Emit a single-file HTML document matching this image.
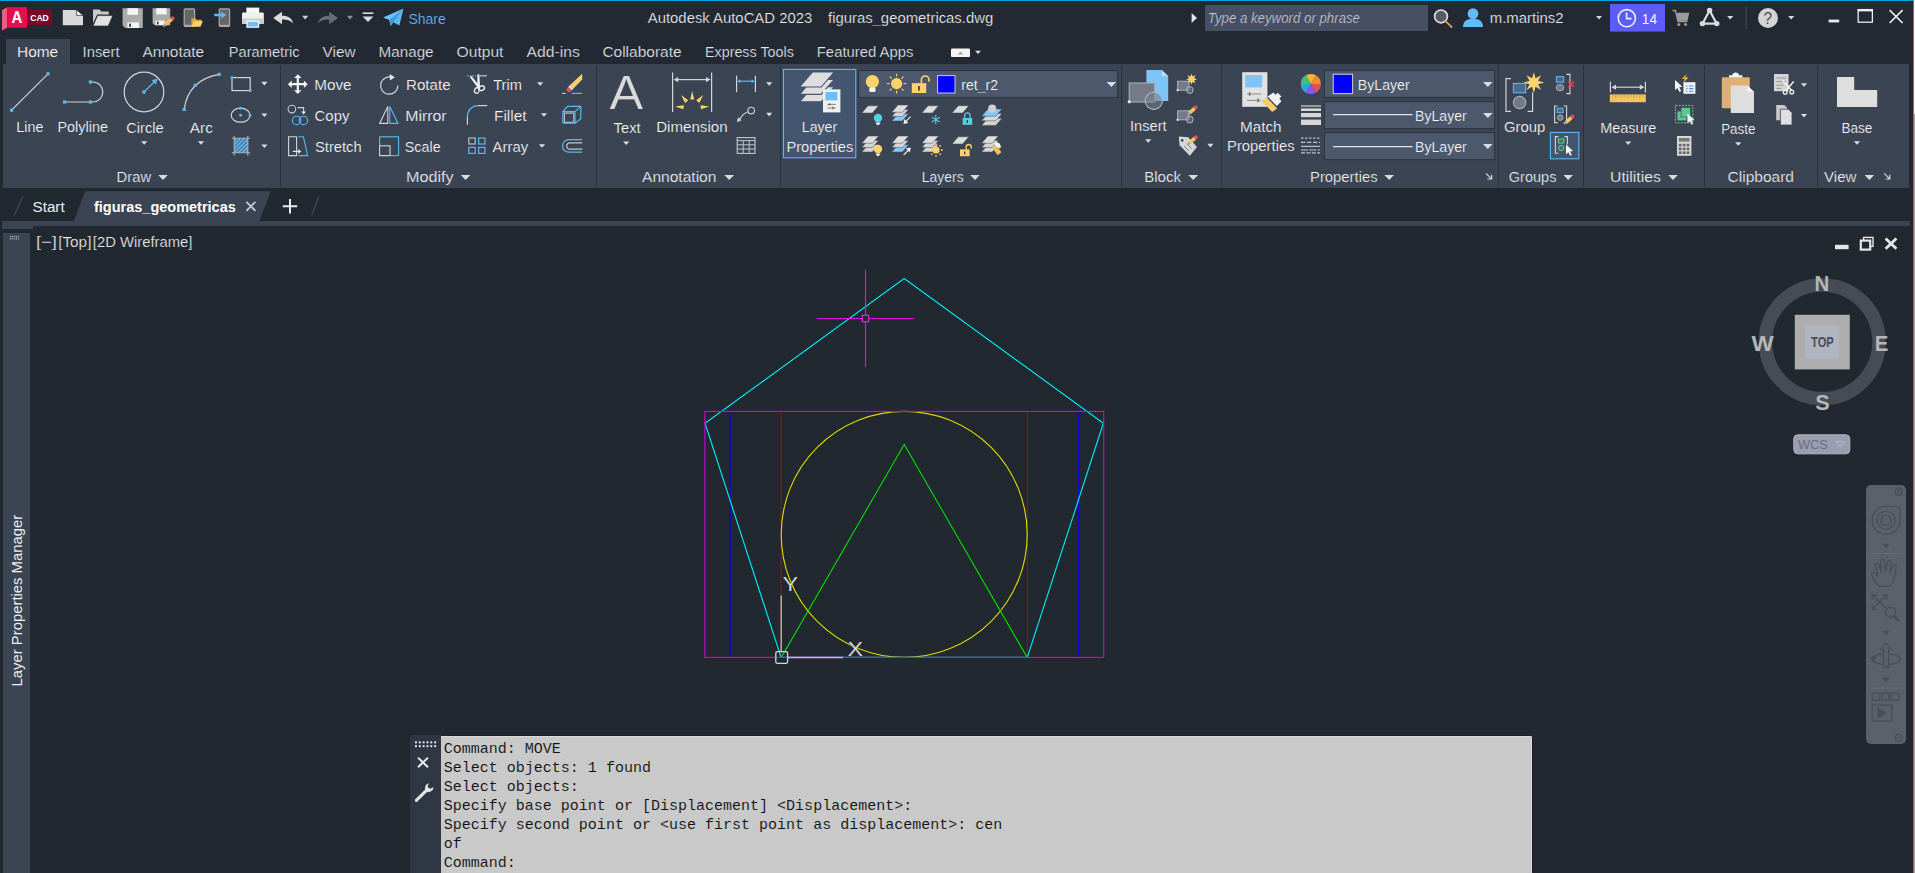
<!DOCTYPE html>
<html lang="en"><head><meta charset="utf-8"><title>Autodesk AutoCAD 2023 - figuras_geometricas.dwg</title>
<style>
html,body{margin:0;padding:0;background:#222933;overflow:hidden}
body{width:1915px;height:873px;position:relative;font-family:"Liberation Sans",sans-serif}
#app{position:absolute;left:0;top:0;width:1915px;height:873px;background:#212830;overflow:hidden}
#titlebg{left:0;top:0;width:1915px;height:64px;background:#222933}
#app div{position:absolute}
#topline{left:0;top:0;width:1915px;height:1px;background:#04a0e8}
#topline2{left:0;top:1px;width:1913px;height:1px;background:#24232a}
#edged{left:1912px;top:1px;width:1px;height:872px;background:#24232a}
#tabhome{left:6px;top:39px;width:64px;height:26px;background:#3b4453}
#ribbon{left:3px;top:64px;width:1906px;height:124px;background:#3b4453}
#docband{left:2px;top:221px;width:1908px;height:5px;background:#3b4453}
#docband2{left:2px;top:221px;width:31px;height:8px;background:#3b4453}
#palette{left:3px;top:233px;width:27px;height:640px;background:#3b4453}
#cmdgrip{left:410px;top:735px;width:31px;height:138px;background:#2f3644;border-top-left-radius:3px}
#cmdtext{left:441px;top:736px;width:1091px;height:137px;background:#c9c9c9;border-top:1px solid #dadada;border-right:1px solid #dadada;box-sizing:border-box;border-top-right-radius:1.5px;box-shadow:1px -1px 0 #1a212b}
#navbar{left:1866px;top:485px;width:40px;height:259px;background:#5b616b;border-radius:5px;box-shadow:none}
#edgeblue{left:1913px;top:0;width:1px;height:873px;background:#04a0e8}
#edgew{left:1914px;top:0;width:1px;height:114px;background:#f4f2ee}
#edgeg{left:1914px;top:114px;width:1px;height:759px;background:#a89e9e}
svg{position:absolute;left:0;top:0}
text{font-family:"Liberation Sans",sans-serif;white-space:pre}
.mono text{font-family:"Liberation Mono",monospace}
</style></head><body>
<div id="app">
<div id="titlebg"></div><div id="topline"></div><div id="topline2"></div>
<div id="tabhome"></div><div id="ribbon"></div>
<div id="docband"></div><div id="docband2"></div><div id="palette"></div>
<div id="cmdgrip"></div><div id="cmdtext"></div><div id="navbar"></div>
<div id="edged"></div><div id="edgeblue"></div><div id="edgew"></div><div id="edgeg"></div>
<svg width="1915" height="873" viewBox="0 0 1915 873">
<g id="titlebar">
<path d="M2 10.3L7.2 7.2V27.6L2 30.4z" fill="#ee5a86" />
<rect x="7.20" y="7.10" width="19.80" height="20.60" fill="#e50e4e" />
<rect x="27.00" y="10.00" width="25.00" height="15.00" fill="#7a0828" />
<text x="11.60" y="23.00" font-size="16.5" fill="#fff" textLength="10.80" lengthAdjust="spacingAndGlyphs" font-weight="bold" >A</text>
<text x="30.20" y="21.00" font-size="8.6" fill="#fff" textLength="18.60" lengthAdjust="spacingAndGlyphs" font-weight="bold" >CAD</text>
<path d="M62.8 10h13.8l6.4 5.4V25.2H62.8z" fill="#d9d9d9" />
<path d="M76.6 10l6.4 5.4h-6.4z" fill="#fafafa" stroke="#212830" stroke-width="0.7" />
<path d="M93 9.4h6.4l1.8 2.2h7.6v3H97.2l-4.2 8.6z" fill="#c9c9c9" />
<path d="M97.6 15.6h15.2l-4.6 10.4H93z" fill="#e2e2e2" stroke="#212830" stroke-width="0.6" />
<path d="M122.6 8.2h20.2v19.8h-17.6l-2.6-2.4z" fill="#ababab" />
<rect x="127.40" y="8.20" width="10.60" height="6.60" fill="#f4f4f4" />
<rect x="127.40" y="22.40" width="11.60" height="5.60" fill="#f4f4f4" />
<rect x="129.20" y="23.60" width="1.70" height="3.40" fill="#333" />
<path d="M152.6 8.2h17.6v17h-15.4l-2.2-2z" fill="#ababab" />
<rect x="156.20" y="8.20" width="10.40" height="6.20" fill="#f4f4f4" />
<rect x="155.60" y="20.60" width="9.00" height="4.60" fill="#f4f4f4" />
<rect x="157.00" y="21.60" width="1.60" height="2.80" fill="#333" />
<path d="M163.2 26.8l0.9-3.6 6.8-5.6 2.4 2.6-6.8 5.6z" fill="#eec15c" />
<path d="M170.2 18l1.5-1.2a1.6 1.6 0 0 1 2.3 0.3l0.3 0.5a1.5 1.5 0 0 1-0.3 2l-1.4 1.1z" fill="#e8505a" />
<path d="M163.2 26.8l0.9-3.6 2.2 2.4z" fill="#9a9a9a" />
<rect x="183.60" y="8.20" width="11.60" height="18.80" fill="#a8a8a8" rx="1.5"/>
<rect x="184.80" y="9.60" width="9.20" height="15.20" fill="#666" />
<path d="M191.4 18.6h4.2l1 1.2h5v2h-7.4l-2.8 4.8z" fill="#e0ac3a" />
<path d="M194 21.2h8.8l-2.4 5.6h-9z" fill="#ffd36b" />
<rect x="218.60" y="8.20" width="11.60" height="18.80" fill="#a8a8a8" rx="1.5"/>
<rect x="219.80" y="9.60" width="9.20" height="15.20" fill="#666" />
<path d="M214.2 13.8h7.2v-2.4l5 3.6-5 3.6v-2.4h-7.2z" fill="#5ab5f2" />
<rect x="246.40" y="7.60" width="12.80" height="6.00" fill="#f6f6f6" />
<path d="M243 12.6h19.6a1.2 1.2 0 0 1 1.2 1.2v10H242v-10a1.2 1.2 0 0 1 1-1.2z" fill="#f0f0f0" />
<rect x="242.00" y="18.40" width="21.80" height="5.40" fill="#cfcfcf" />
<rect x="246.40" y="20.60" width="12.80" height="7.20" fill="#fbfbfb" />
<rect x="247.60" y="21.80" width="10.40" height="4.80" fill="#74bdf4" />
<path d="M273.2 18l8.800-6.200v4c6 0 10.600 2.600 11 8-2.400-3.400-5.800-4.200-11-4.200v4.600z" fill="#dcdcdc" />
<path d="M302.10 15.80h6.2l-3.10 3.6z" fill="#cfcfcf" />
<path d="M338 18l-8.800-6.200v4c-6 0-10.600 2.600-11 8 2.400-3.400 5.800-4.200 11-4.200v4.600z" fill="#666c78" />
<path d="M346.90 15.80h6.2l-3.10 3.6z" fill="#8c919b" />
<rect x="362.60" y="12.40" width="10.80" height="1.60" fill="#dcdcdc" />
<path d="M362.6 16.4h10.8l-5.4 5.6z" fill="#dcdcdc" />
<path d="M383.4 17.6l20-8.8-4 16.8-6.2-3.4-2.6 3.8-1.4-6.2z" fill="#5cb8f0" />
<path d="M389.2 19.8l13-10-8.8 12.4-2.8 3.8z" fill="#3d9ede" />
<path d="M403.4 8.8l-14.2 11-5.8-2.2z" fill="#6cc2f6" />
<text x="408.40" y="24.00" font-size="15.4" fill="#69bdf5" textLength="37.40" lengthAdjust="spacingAndGlyphs" stroke="#212830" stroke-width="0.22" >Share</text>
<text x="647.80" y="23.20" font-size="15.2" fill="#f0f0f0" textLength="164.40" lengthAdjust="spacingAndGlyphs" stroke="#212830" stroke-width="0.22" >Autodesk AutoCAD 2023</text>
<text x="828.00" y="23.20" font-size="15.2" fill="#f0f0f0" textLength="165.20" lengthAdjust="spacingAndGlyphs" stroke="#212830" stroke-width="0.22" >figuras_geometricas.dwg</text>
<path d="M1191.6 13l5.4 5-5.4 5z" fill="#e6e6e6" />
<rect x="1205.00" y="5.00" width="223.00" height="26.00" fill="#464f63" />
<text x="1207.80" y="23.00" font-size="14.6" fill="#c4c8d0" textLength="152.20" lengthAdjust="spacingAndGlyphs" font-style="italic" stroke="#464f63" stroke-width="0.22" >Type a keyword or phrase</text>
<circle cx="1441.00" cy="16.40" r="6.40" fill="#555c68" stroke="#dedede" stroke-width="1.7" />
<line x1="1445.80" y1="21.40" x2="1451.60" y2="27.00" stroke="#d9a05a" stroke-width="1.8" stroke-linecap="round"/>
<circle cx="1473.00" cy="13.60" r="5.40" fill="#62bbf4" />
<path d="M1463 27c0-6 4-8.2 10-8.2s10 2.2 10 8.2z" fill="#62bbf4" />
<text x="1489.80" y="23.20" font-size="15.2" fill="#f0f0f0" textLength="73.80" lengthAdjust="spacingAndGlyphs" stroke="#212830" stroke-width="0.22" >m.martins2</text>
<path d="M1595.90 16.00h6.2l-3.10 3.6z" fill="#d6d6d6" />
<rect x="1610.00" y="4.00" width="55.00" height="27.60" fill="#5c5cf6" />
<circle cx="1626.80" cy="18.20" r="8.60" fill="none" stroke="#ececff" stroke-width="1.6" />
<path d="M1626.6 12.6v6h5" fill="none" stroke="#ececff" stroke-width="1.6" />
<text x="1641.80" y="24.00" font-size="15.4" fill="#f4f4ff" textLength="15.20" lengthAdjust="spacingAndGlyphs" >14</text>
<path d="M1672.4 10.4h3l2.6 11h8.6l1.8-8h-11" fill="none" stroke="#9c9c9c" stroke-width="1.5" />
<path d="M1676.6 13.4h11.6l-1.6 7.4h-8.4z" fill="#9c9c9c" />
<circle cx="1678.80" cy="24.60" r="1.50" fill="#9c9c9c" />
<circle cx="1685.60" cy="24.60" r="1.50" fill="#9c9c9c" />
<path d="M1709.6 10.6l-7 13h14z" fill="none" stroke="#dcdcdc" stroke-width="2.2" stroke-linejoin="round"/>
<circle cx="1709.60" cy="10.40" r="2.70" fill="#dcdcdc" />
<circle cx="1702.40" cy="23.60" r="2.70" fill="#dcdcdc" />
<circle cx="1716.80" cy="23.60" r="2.70" fill="#dcdcdc" />
<path d="M1727.10 16.00h6.2l-3.10 3.6z" fill="#d6d6d6" />
<rect x="1745.60" y="7.00" width="1.00" height="22.00" fill="#46506a" />
<circle cx="1768.00" cy="18.00" r="10.00" fill="#d4d4d4" />
<text x="1763.60" y="23.80" font-size="16.5" fill="#4a4f58" textLength="8.60" lengthAdjust="spacingAndGlyphs" >?</text>
<path d="M1788.10 16.00h6.2l-3.10 3.6z" fill="#d6d6d6" />
<rect x="1828.60" y="19.60" width="10.60" height="2.80" fill="#ececec" />
<rect x="1858.20" y="9.60" width="14.20" height="12.60" fill="none" stroke="#ececec" stroke-width="1.3"/>
<rect x="1857.60" y="9.00" width="15.40" height="2.40" fill="#ececec" />
<path d="M1889.6 10.2l13 12.8M1902.6 10.2l-13 12.8" fill="none" stroke="#ececec" stroke-width="1.7" />
</g>
<g id="ribbontabs">
<text x="17.00" y="57.00" font-size="15.2" fill="#ffffff" textLength="41.20" lengthAdjust="spacingAndGlyphs" stroke="#3b4453" stroke-width="0.22" >Home</text>
<text x="82.60" y="57.00" font-size="15.2" fill="#e4e6ea" textLength="37.00" lengthAdjust="spacingAndGlyphs" stroke="#212830" stroke-width="0.22" >Insert</text>
<text x="142.40" y="57.00" font-size="15.2" fill="#e4e6ea" textLength="61.80" lengthAdjust="spacingAndGlyphs" stroke="#212830" stroke-width="0.22" >Annotate</text>
<text x="228.80" y="57.00" font-size="15.2" fill="#e4e6ea" textLength="70.80" lengthAdjust="spacingAndGlyphs" stroke="#212830" stroke-width="0.22" >Parametric</text>
<text x="322.60" y="57.00" font-size="15.2" fill="#e4e6ea" textLength="33.00" lengthAdjust="spacingAndGlyphs" stroke="#212830" stroke-width="0.22" >View</text>
<text x="378.60" y="57.00" font-size="15.2" fill="#e4e6ea" textLength="55.00" lengthAdjust="spacingAndGlyphs" stroke="#212830" stroke-width="0.22" >Manage</text>
<text x="456.60" y="57.00" font-size="15.2" fill="#e4e6ea" textLength="46.80" lengthAdjust="spacingAndGlyphs" stroke="#212830" stroke-width="0.22" >Output</text>
<text x="526.60" y="57.00" font-size="15.2" fill="#e4e6ea" textLength="53.20" lengthAdjust="spacingAndGlyphs" stroke="#212830" stroke-width="0.22" >Add-ins</text>
<text x="602.40" y="57.00" font-size="15.2" fill="#e4e6ea" textLength="79.20" lengthAdjust="spacingAndGlyphs" stroke="#212830" stroke-width="0.22" >Collaborate</text>
<text x="705.00" y="57.00" font-size="15.2" fill="#e4e6ea" textLength="88.80" lengthAdjust="spacingAndGlyphs" stroke="#212830" stroke-width="0.22" >Express Tools</text>
<text x="816.80" y="57.00" font-size="15.2" fill="#e4e6ea" textLength="96.60" lengthAdjust="spacingAndGlyphs" stroke="#212830" stroke-width="0.22" >Featured Apps</text>
<rect x="951.00" y="48.60" width="19.00" height="8.40" fill="#f4f4f4" rx="1"/>
<path d="M957.6 54.6l2.9-3.2 2.9 3.2z" fill="#a4a4a4" />
<path d="M975.00 50.70h6l-3.00 3.4z" fill="#e0e0e0" />
</g>
<g id="paneltitles">
<rect x="280.00" y="65.00" width="1.00" height="122.00" fill="#2a303c" />
<rect x="596.00" y="65.00" width="1.00" height="122.00" fill="#2a303c" />
<rect x="780.00" y="65.00" width="1.00" height="122.00" fill="#2a303c" />
<rect x="1121.00" y="65.00" width="1.00" height="122.00" fill="#2a303c" />
<rect x="1221.00" y="65.00" width="1.00" height="122.00" fill="#2a303c" />
<rect x="1498.00" y="65.00" width="1.00" height="122.00" fill="#2a303c" />
<rect x="1583.00" y="65.00" width="1.00" height="122.00" fill="#2a303c" />
<rect x="1704.00" y="65.00" width="1.00" height="122.00" fill="#2a303c" />
<rect x="1817.00" y="65.00" width="1.00" height="122.00" fill="#2a303c" />
<text x="116.60" y="181.60" font-size="15.2" fill="#eef0f3" textLength="34.60" lengthAdjust="spacingAndGlyphs" stroke="#3b4453" stroke-width="0.22" >Draw</text>
<path d="M158.20 174.90h9.6l-4.80 5z" fill="#dcdcdc" />
<text x="406.00" y="181.60" font-size="15.2" fill="#eef0f3" textLength="47.60" lengthAdjust="spacingAndGlyphs" stroke="#3b4453" stroke-width="0.22" >Modify</text>
<path d="M460.80 174.90h9.6l-4.80 5z" fill="#dcdcdc" />
<text x="642.00" y="181.60" font-size="15.2" fill="#eef0f3" textLength="74.40" lengthAdjust="spacingAndGlyphs" stroke="#3b4453" stroke-width="0.22" >Annotation</text>
<path d="M724.40 174.90h9.6l-4.80 5z" fill="#dcdcdc" />
<text x="921.80" y="181.60" font-size="15.2" fill="#eef0f3" textLength="41.80" lengthAdjust="spacingAndGlyphs" stroke="#3b4453" stroke-width="0.22" >Layers</text>
<path d="M970.20 174.90h9.6l-4.80 5z" fill="#dcdcdc" />
<text x="1144.20" y="181.60" font-size="15.2" fill="#eef0f3" textLength="36.80" lengthAdjust="spacingAndGlyphs" stroke="#3b4453" stroke-width="0.22" >Block</text>
<path d="M1188.40 174.90h9.6l-4.80 5z" fill="#dcdcdc" />
<text x="1310.00" y="181.60" font-size="15.2" fill="#eef0f3" textLength="67.60" lengthAdjust="spacingAndGlyphs" stroke="#3b4453" stroke-width="0.22" >Properties</text>
<path d="M1384.40 174.90h9.6l-4.80 5z" fill="#dcdcdc" />
<text x="1508.80" y="181.60" font-size="15.2" fill="#eef0f3" textLength="47.60" lengthAdjust="spacingAndGlyphs" stroke="#3b4453" stroke-width="0.22" >Groups</text>
<path d="M1563.40 174.90h9.6l-4.80 5z" fill="#dcdcdc" />
<text x="1610.00" y="181.60" font-size="15.2" fill="#eef0f3" textLength="50.80" lengthAdjust="spacingAndGlyphs" stroke="#3b4453" stroke-width="0.22" >Utilities</text>
<path d="M1668.20 174.90h9.6l-4.80 5z" fill="#dcdcdc" />
<text x="1727.60" y="181.60" font-size="15.2" fill="#eef0f3" textLength="66.40" lengthAdjust="spacingAndGlyphs" stroke="#3b4453" stroke-width="0.22" >Clipboard</text>
<text x="1824.00" y="181.60" font-size="15.2" fill="#eef0f3" textLength="32.40" lengthAdjust="spacingAndGlyphs" stroke="#3b4453" stroke-width="0.22" >View</text>
<path d="M1864.60 174.90h9.6l-4.80 5z" fill="#dcdcdc" />
<path d="M1486 173.4l5 5M1491.6 174.8v4.2h-4.2" fill="none" stroke="#d8d8d8" stroke-width="1.2" />
<path d="M1884.2 173.4l5 5M1889.8 174.8v4.2h-4.2" fill="none" stroke="#d8d8d8" stroke-width="1.2" />
</g>
<g id="draw">
<line x1="11.60" y1="110.20" x2="48.00" y2="73.80" stroke="#d2d4d8" stroke-width="1.2" />
<rect x="10.00" y="108.60" width="3.20" height="3.20" fill="#5cb8f0" />
<rect x="46.40" y="72.20" width="3.20" height="3.20" fill="#5cb8f0" />
<text x="16.20" y="132.20" font-size="15" fill="#fbfbfb" textLength="27.20" lengthAdjust="spacingAndGlyphs" stroke="#3b4453" stroke-width="0.22" >Line</text>
<path d="M64.6 102h28.2a10 10 0 0 0 0-20h-2.4" fill="none" stroke="#d2d4d8" stroke-width="1.2" />
<rect x="63.00" y="100.40" width="3.20" height="3.20" fill="#5cb8f0" />
<rect x="88.80" y="100.40" width="3.20" height="3.20" fill="#5cb8f0" />
<rect x="88.80" y="80.40" width="3.20" height="3.20" fill="#5cb8f0" />
<text x="57.40" y="132.20" font-size="15" fill="#fbfbfb" textLength="50.60" lengthAdjust="spacingAndGlyphs" stroke="#3b4453" stroke-width="0.22" >Polyline</text>
<circle cx="144.00" cy="92.00" r="19.80" fill="none" stroke="#d2d4d8" stroke-width="1.2" />
<line x1="144.00" y1="92.00" x2="155.00" y2="81.20" stroke="#5cb8f0" stroke-width="1.2" />
<path d="M157.6 78.6l-1.6 6-4.4-4.4z" fill="#5cb8f0" />
<rect x="142.40" y="90.40" width="3.20" height="3.20" fill="#5cb8f0" />
<text x="126.20" y="133.00" font-size="15" fill="#fbfbfb" textLength="37.40" lengthAdjust="spacingAndGlyphs" stroke="#3b4453" stroke-width="0.22" >Circle</text>
<path d="M141.10 141.20h6.2l-3.10 3.6z" fill="#dcdcdc" />
<path d="M184.2 109.4Q188 80 219.2 74.4" fill="none" stroke="#d2d4d8" stroke-width="1.2" />
<rect x="182.60" y="107.80" width="3.20" height="3.20" fill="#5cb8f0" />
<rect x="193.60" y="83.80" width="3.20" height="3.20" fill="#5cb8f0" />
<rect x="217.60" y="72.80" width="3.20" height="3.20" fill="#5cb8f0" />
<text x="189.80" y="133.00" font-size="15" fill="#fbfbfb" textLength="23.00" lengthAdjust="spacingAndGlyphs" stroke="#3b4453" stroke-width="0.22" >Arc</text>
<path d="M197.90 141.20h6.2l-3.10 3.6z" fill="#dcdcdc" />
<rect x="232.00" y="77.60" width="18.20" height="13.00" fill="none" stroke="#d2d4d8" stroke-width="1.2"/>
<rect x="230.70" y="76.30" width="2.60" height="2.60" fill="#5cb8f0" />
<rect x="248.90" y="89.30" width="2.60" height="2.60" fill="#5cb8f0" />
<path d="M261.30 81.80h6.2l-3.10 3.6z" fill="#dcdcdc" />
<ellipse cx="240.6" cy="115.2" rx="9.4" ry="7" fill="none" stroke="#d2d4d8" stroke-width="1.2"/>
<rect x="239.30" y="113.90" width="2.60" height="2.60" fill="#5cb8f0" />
<rect x="239.30" y="106.90" width="2.60" height="2.60" fill="#5cb8f0" />
<rect x="248.70" y="113.90" width="2.60" height="2.60" fill="#5cb8f0" />
<path d="M261.30 113.40h6.2l-3.10 3.6z" fill="#dcdcdc" />
<rect x="234.20" y="138.20" width="13.60" height="14.60" fill="#3f7fb4" />
<line x1="222.2" y1="152.8" x2="236.79999999999998" y2="138.2" stroke="#7cc4f4" stroke-width="1.1" clip-path="url(#hc)"/>
<line x1="226.2" y1="152.8" x2="240.79999999999998" y2="138.2" stroke="#7cc4f4" stroke-width="1.1" clip-path="url(#hc)"/>
<line x1="230.2" y1="152.8" x2="244.79999999999998" y2="138.2" stroke="#7cc4f4" stroke-width="1.1" clip-path="url(#hc)"/>
<line x1="234.2" y1="152.8" x2="248.79999999999998" y2="138.2" stroke="#7cc4f4" stroke-width="1.1" clip-path="url(#hc)"/>
<line x1="238.2" y1="152.8" x2="252.79999999999998" y2="138.2" stroke="#7cc4f4" stroke-width="1.1" clip-path="url(#hc)"/>
<line x1="242.2" y1="152.8" x2="256.8" y2="138.2" stroke="#7cc4f4" stroke-width="1.1" clip-path="url(#hc)"/>
<line x1="246.2" y1="152.8" x2="260.8" y2="138.2" stroke="#7cc4f4" stroke-width="1.1" clip-path="url(#hc)"/>
<clipPath id="hc"><rect x="234.2" y="138.2" width="13.6" height="14.6"/></clipPath>
<path d="M234.2 136v19.4M247.8 136v19.4M231.8 138.2h18.4M231.8 152.8h18.4" fill="none" stroke="#aeb2b8" stroke-width="1.1" />
<path d="M261.30 144.40h6.2l-3.10 3.6z" fill="#dcdcdc" />
</g>
<g id="modify">
<path d="M297.8 74.3l3.7 3.8h-2.6V83.10000000000001H303.9v-2.6l3.8 3.7l-3.8 3.7v-2.6H298.90000000000003V90.30000000000001h2.6l-3.7 3.8l-3.7 -3.8h2.6V85.3H291.70000000000005v2.6l-3.8 -3.7l3.8 -3.7v2.6H296.7V78.1h-2.6z" fill="#f4f4f4" />
<text x="314.20" y="89.90" font-size="15" fill="#fbfbfb" textLength="37.40" lengthAdjust="spacingAndGlyphs" stroke="#3b4453" stroke-width="0.22" >Move</text>
<path d="M392.4 77.6A8.6 8.6 0 1 0 397.8 85.4" fill="none" stroke="#d2d4d8" stroke-width="1.2" />
<path d="M389.6 74l5.2 3.2-4.8 3.4z" fill="#e4e4e4" />
<text x="406.00" y="89.90" font-size="15" fill="#fbfbfb" textLength="44.60" lengthAdjust="spacingAndGlyphs" stroke="#3b4453" stroke-width="0.22" >Rotate</text>
<line x1="467.20" y1="75.80" x2="476.00" y2="75.80" stroke="#5cb8f0" stroke-width="1.2" stroke-dasharray="1.6 1"/>
<line x1="480.00" y1="75.80" x2="487.00" y2="75.80" stroke="#c4c6ca" stroke-width="1.2" />
<path d="M469.6 76.8l2.2-0.600 8.200 10.600-2 1.200z" fill="#f2f2f2" />
<path d="M477.400 74.200l2 0.400 0.600 12.400-2.600 0.800z" fill="#f2f2f2" />
<ellipse cx="476.8" cy="90.6" rx="2.3" ry="2.8" fill="none" stroke="#f2f2f2" stroke-width="1.3" transform="rotate(20 476.8 90.6)"/>
<ellipse cx="481.8" cy="88.2" rx="2.8" ry="2.2" fill="none" stroke="#f2f2f2" stroke-width="1.3" transform="rotate(-25 481.8 88.2)"/>
<text x="493.20" y="89.90" font-size="15" fill="#fbfbfb" textLength="28.80" lengthAdjust="spacingAndGlyphs" stroke="#3b4453" stroke-width="0.22" >Trim</text>
<path d="M537.10 82.20h6.2l-3.10 3.6z" fill="#dcdcdc" />
<path d="M582.2 73.8v5.800l-9 9.200-3.600-3.400z" fill="#f7d070" />
<path d="M569.600 85.400l3.600 3.400-1.400 1.400-3.600-3.400z" fill="#f6f6f6" />
<path d="M568.200 86.800l3.600 3.400-1.200 1.200a2.500 2.500 0 0 1-3.600-3.400z" fill="#ea4e5c" />
<line x1="562.00" y1="93.40" x2="565.80" y2="93.40" stroke="#d2d4d8" stroke-width="1" />
<line x1="571.80" y1="93.40" x2="582.20" y2="93.40" stroke="#5cb8f0" stroke-width="1.2" />
<circle cx="291.90" cy="109.10" r="3.80" fill="none" stroke="#c9ccd1" stroke-width="1.1" />
<path d="M297.6 107.6h6v4.4" fill="none" stroke="#d2d4d8" stroke-width="1.1" />
<path d="M301.2 111.4h4.8l-2.4 3z" fill="#e4e4e4" />
<circle cx="296.60" cy="120.40" r="4.20" fill="none" stroke="#5cb8f0" stroke-width="1.1" />
<circle cx="303.40" cy="120.40" r="4.20" fill="none" stroke="#5cb8f0" stroke-width="1.1" />
<text x="314.60" y="120.80" font-size="15" fill="#fbfbfb" textLength="34.80" lengthAdjust="spacingAndGlyphs" stroke="#3b4453" stroke-width="0.22" >Copy</text>
<path d="M387.8 106.6v16.8h-8.2z" fill="none" stroke="#d2d4d8" stroke-width="1.1" />
<path d="M389.8 106.6v16.8h8.2z" fill="none" stroke="#5cb8f0" stroke-width="1.1" />
<text x="405.20" y="120.80" font-size="15" fill="#fbfbfb" textLength="41.40" lengthAdjust="spacingAndGlyphs" stroke="#3b4453" stroke-width="0.22" >Mirror</text>
<path d="M467.4 124.8v-8.4" fill="none" stroke="#d2d4d8" stroke-width="1.2" />
<path d="M467.4 116.4A10.6 10.6 0 0 1 478 105.6" fill="none" stroke="#5cb8f0" stroke-width="1.2" />
<path d="M478 105.6h9.2" fill="none" stroke="#d2d4d8" stroke-width="1.2" />
<text x="494.00" y="120.80" font-size="15" fill="#fbfbfb" textLength="32.60" lengthAdjust="spacingAndGlyphs" stroke="#3b4453" stroke-width="0.22" >Fillet</text>
<path d="M540.90 113.20h6.2l-3.10 3.6z" fill="#dcdcdc" />
<path d="M562.8 123.200v-11.600l4.800-5.200h13.200v12.200l-5.800 4.600M562.800 111.600h12.200M575 111.600l5.800-5.200" fill="none" stroke="#5cb8f0" stroke-width="1.2" />
<path d="M564.400 113.200h9.400v9.200h-9.400z" fill="none" stroke="#b8bbc2" stroke-width="1.2" />
<path d="M575 111.600v11.600h-12.200" fill="none" stroke="#5cb8f0" stroke-width="1.2" />
<path d="M288.6 136.8h8v18.8h-8zM296.6 136.8" fill="none" stroke="#d2d4d8" stroke-width="1.1" />
<path d="M298.4 136.8h5l4.2 18.8h-9.2" fill="none" stroke="#5cb8f0" stroke-width="1.1" />
<line x1="292.80" y1="151.40" x2="298.80" y2="151.40" stroke="#e4e4e4" stroke-width="1.2" />
<path d="M298.200 149l3.200 2.400-3.200 2.400z" fill="#e4e4e4" />
<text x="315.00" y="151.70" font-size="15" fill="#fbfbfb" textLength="46.60" lengthAdjust="spacingAndGlyphs" stroke="#3b4453" stroke-width="0.22" >Stretch</text>
<rect x="379.60" y="136.80" width="19.00" height="18.80" fill="none" stroke="#5cb8f0" stroke-width="1.1"/>
<rect x="379.60" y="145.80" width="10.40" height="9.80" fill="#3b4453" stroke="#d2d4d8" stroke-width="1.1"/>
<text x="404.80" y="151.70" font-size="15" fill="#fbfbfb" textLength="35.80" lengthAdjust="spacingAndGlyphs" stroke="#3b4453" stroke-width="0.22" >Scale</text>
<rect x="468.80" y="138.00" width="6.40" height="6.00" fill="none" stroke="#b8bbc2" stroke-width="1.2"/>
<rect x="478.60" y="138.00" width="6.40" height="6.00" fill="none" stroke="#5cb8f0" stroke-width="1.2"/>
<rect x="468.80" y="147.40" width="6.40" height="6.00" fill="none" stroke="#5cb8f0" stroke-width="1.2"/>
<rect x="478.60" y="147.40" width="6.40" height="6.00" fill="none" stroke="#5cb8f0" stroke-width="1.2"/>
<text x="492.60" y="151.70" font-size="15" fill="#fbfbfb" textLength="35.60" lengthAdjust="spacingAndGlyphs" stroke="#3b4453" stroke-width="0.22" >Array</text>
<path d="M538.90 144.20h6.2l-3.10 3.6z" fill="#dcdcdc" />
<path d="M582.200 139.600h-13.400a6.200 6.200 0 0 0 0 12.600h13.400" fill="none" stroke="#5cb8f0" stroke-width="1.2" />
<path d="M582.2 142.800h-12.200a3.200 3.200 0 0 0 0 6.400h12.200" fill="none" stroke="#c4c6ca" stroke-width="1.2" />
</g>
<g id="annotation">
<text x="609.60" y="109.40" font-size="49" fill="#dadada" textLength="33.60" lengthAdjust="spacingAndGlyphs" stroke="#3b4453" stroke-width="0.22" >A</text>
<text x="613.60" y="133.00" font-size="15" fill="#fbfbfb" textLength="27.00" lengthAdjust="spacingAndGlyphs" stroke="#3b4453" stroke-width="0.22" >Text</text>
<path d="M623.10 141.40h6.2l-3.10 3.6z" fill="#dcdcdc" />
<path d="M672.6 72.4v39.6M711.6 72.4v39.6" fill="none" stroke="#d2d4d8" stroke-width="1.2" />
<line x1="676.00" y1="79.60" x2="708.00" y2="79.60" stroke="#d2d4d8" stroke-width="1.2" />
<path d="M673.6 79.6l4.6-2.6v5.2zM710.6 79.6l-4.6-2.6v5.2z" fill="#d2d4d8" />
<path d="M694.20 99.60L692.20 91.00L690.20 99.60z" fill="#ffd36b" />
<path d="M699.26 102.90L703.26 95.02L696.20 100.33z" fill="#ffd36b" />
<path d="M688.20 100.33L681.14 95.02L685.14 102.90z" fill="#ffd36b" />
<path d="M700.96 109.29L709.31 106.40L700.54 105.31z" fill="#ffd36b" />
<path d="M683.86 105.31L675.09 106.40L683.44 109.29z" fill="#ffd36b" />
<text x="656.20" y="131.80" font-size="15" fill="#fbfbfb" textLength="71.40" lengthAdjust="spacingAndGlyphs" stroke="#3b4453" stroke-width="0.22" >Dimension</text>
<path d="M736.6 75.8v16.4M755.4 75.8v16.4" fill="none" stroke="#d2d4d8" stroke-width="1.2" />
<line x1="738.60" y1="81.20" x2="753.40" y2="81.20" stroke="#5cb8f0" stroke-width="1.2" />
<path d="M737.2 81.2l3.2-1.8v3.6zM754.8 81.2l-3.2-1.8v3.6z" fill="#5cb8f0" />
<path d="M766.10 82.20h6.2l-3.10 3.6z" fill="#dcdcdc" />
<circle cx="751.20" cy="110.60" r="3.30" fill="none" stroke="#d2d4d8" stroke-width="1.1" />
<path d="M748 111.6l-5 3-4.4 6" fill="none" stroke="#d2d4d8" stroke-width="1.1" />
<path d="M736.8 122.2l1.4-5 3.4 3z" fill="#d2d4d8" />
<path d="M766.10 112.80h6.2l-3.10 3.6z" fill="#dcdcdc" />
<rect x="737.20" y="137.60" width="17.80" height="15.80" fill="none" stroke="#c4c6ca" stroke-width="1.1"/>
<path d="M737.2 140.6h17.8M737.2 144.8h17.8M737.2 149h17.8M743.2 140.6v12.8M749.2 140.6v12.8" fill="none" stroke="#c4c6ca" stroke-width="1" />
</g>
<g id="layers">
<rect x="783.40" y="69.40" width="72.40" height="88.40" fill="#44566f" stroke="#5cb8f0" stroke-width="1.1"/>
<path d="M812.6 86.8h21.6l-13 15h-21.6z" fill="#dedede" stroke="#44566f" stroke-width="1.1" />
<path d="M812.6 79.4h21.6l-13 15h-21.6z" fill="#dedede" stroke="#44566f" stroke-width="1.1" />
<path d="M812.6 72.0h21.6l-13 15h-21.6z" fill="#dedede" stroke="#44566f" stroke-width="1.1" />
<rect x="823.00" y="89.40" width="17.40" height="23.00" fill="#f0f0f0" />
<rect x="825.40" y="92.00" width="12.00" height="8.40" fill="#6cbff6" />
<path d="M827.2 104.4h8.6M827.2 108h8.6" fill="none" stroke="#777" stroke-width="0.9" />
<path d="M829.6 103.2v2.4M833 106.8v2.4" fill="none" stroke="#555" stroke-width="1.1" />
<text x="801.80" y="131.80" font-size="15" fill="#fbfbfb" textLength="35.40" lengthAdjust="spacingAndGlyphs" stroke="#44566f" stroke-width="0.22" >Layer</text>
<text x="786.40" y="151.60" font-size="15" fill="#fbfbfb" textLength="67.00" lengthAdjust="spacingAndGlyphs" stroke="#44566f" stroke-width="0.22" >Properties</text>
<rect x="858.60" y="70.60" width="259.00" height="27.00" fill="#4c586c" stroke="#2c3340" stroke-width="1"/>
<circle cx="872.40" cy="81.60" r="6.60" fill="#ffd36b" />
<rect x="869.20" y="87.40" width="6.40" height="4.60" fill="#f4f4f4" rx="1.6"/>
<circle cx="896.60" cy="83.60" r="5.60" fill="#ffd36b" />
<line x1="903.60" y1="83.60" x2="906.40" y2="83.60" stroke="#ffd36b" stroke-width="1.1" />
<line x1="901.55" y1="88.55" x2="903.53" y2="90.53" stroke="#ffd36b" stroke-width="1.1" />
<line x1="896.60" y1="90.60" x2="896.60" y2="93.40" stroke="#ffd36b" stroke-width="1.1" />
<line x1="891.65" y1="88.55" x2="889.67" y2="90.53" stroke="#ffd36b" stroke-width="1.1" />
<line x1="889.60" y1="83.60" x2="886.80" y2="83.60" stroke="#ffd36b" stroke-width="1.1" />
<line x1="891.65" y1="78.65" x2="889.67" y2="76.67" stroke="#ffd36b" stroke-width="1.1" />
<line x1="896.60" y1="76.60" x2="896.60" y2="73.80" stroke="#ffd36b" stroke-width="1.1" />
<line x1="901.55" y1="78.65" x2="903.53" y2="76.67" stroke="#ffd36b" stroke-width="1.1" />
<rect x="911.80" y="83.20" width="14.40" height="9.80" fill="#ffd36b" />
<rect x="918.00" y="86.00" width="1.80" height="4.60" fill="#3b4453" />
<path d="M921.4 83.2v-3.4a3.8 3.8 0 0 1 7.6 0v2" fill="none" stroke="#ffd36b" stroke-width="1.6" />
<rect x="937.60" y="75.60" width="17.40" height="17.40" fill="#0000ff" stroke="#c8c8d4" stroke-width="1"/>
<text x="961.20" y="90.00" font-size="15" fill="#fbfbfb" textLength="37.00" lengthAdjust="spacingAndGlyphs" stroke="#4c586c" stroke-width="0.22" >ret_r2</text>
<path d="M1106.60 82.10h9.6l-4.80 5z" fill="#dcdcdc" />
<path d="M868.00 105.80h10.6l-6.2 7.2h-10.6z" fill="#dcdcdc" stroke="#3b4453" stroke-width="0.5" />
<circle cx="878.00" cy="118.00" r="4.20" fill="#56d0de" />
<path d="M875.8 122.4h4.4v1l-2.2 2-2.2-2z" fill="#f4f4f4" />
<path d="M898.00 113.80h10.6l-6.2 7.2h-10.6z" fill="#86c8f6" stroke="#3b4453" stroke-width="0.5" />
<path d="M898.00 109.40h10.6l-6.2 7.2h-10.6z" fill="#d4d4d4" stroke="#3b4453" stroke-width="0.5" />
<path d="M898.00 105.00h10.6l-6.2 7.2h-10.6z" fill="#dedede" stroke="#3b4453" stroke-width="0.5" />
<path d="M910.6 116.6l-6 6" fill="none" stroke="#e8e8e8" stroke-width="1.2" />
<path d="M903.4 124l1-5 4 4z" fill="#f0f0f0" />
<path d="M928.00 105.80h10.6l-6.2 7.2h-10.6z" fill="#dcdcdc" stroke="#3b4453" stroke-width="0.5" />
<line x1="931.82" y1="117.30" x2="939.78" y2="121.90" stroke="#56d0de" stroke-width="1.1" />
<line x1="935.80" y1="115.00" x2="935.80" y2="124.20" stroke="#56d0de" stroke-width="1.1" />
<line x1="939.78" y1="117.30" x2="931.82" y2="121.90" stroke="#56d0de" stroke-width="1.1" />
<path d="M958.20 105.80h10.6l-6.2 7.2h-10.6z" fill="#dcdcdc" stroke="#3b4453" stroke-width="0.5" />
<rect x="962.60" y="118.00" width="9.60" height="6.80" fill="#56d0de" />
<rect x="966.60" y="120.00" width="1.40" height="3.00" fill="#3b4453" />
<path d="M964.8000000000001 118v-2.6a2.6 2.6 0 0 1 5.2 0v2.6" fill="none" stroke="#56d0de" stroke-width="1.3" />
<path d="M987.8 118.2h14.2l-6.2 7.2h-14.2z" fill="#d4d4d4" stroke="#3b4453" stroke-width="0.5" />
<path d="M987.8 113.6h14.2l-6.2 7.2h-14.2z" fill="#d8d8d8" stroke="#3b4453" stroke-width="0.5" />
<path d="M987.8 109h14.2l-6.2 7.2h-14.2z" fill="#86c8f6" stroke="#3b4453" stroke-width="0.5" />
<circle cx="992.20" cy="108.40" r="4.00" fill="#cfcfcf" />
<path d="M868.00 144.80h10.6l-6.2 7.2h-10.6z" fill="#d4d4d4" stroke="#3b4453" stroke-width="0.5" />
<path d="M868.00 140.40h10.6l-6.2 7.2h-10.6z" fill="#d4d4d4" stroke="#3b4453" stroke-width="0.5" />
<path d="M868.00 136.00h10.6l-6.2 7.2h-10.6z" fill="#dedede" stroke="#3b4453" stroke-width="0.5" />
<circle cx="878.00" cy="149.00" r="4.20" fill="#ffd36b" />
<path d="M875.8 153.4h4.4v1l-2.2 2-2.2-2z" fill="#f4f4f4" />
<path d="M898.00 144.80h10.6l-6.2 7.2h-10.6z" fill="#86c8f6" stroke="#3b4453" stroke-width="0.5" />
<path d="M898.00 140.40h10.6l-6.2 7.2h-10.6z" fill="#d4d4d4" stroke="#3b4453" stroke-width="0.5" />
<path d="M898.00 136.00h10.6l-6.2 7.2h-10.6z" fill="#dedede" stroke="#3b4453" stroke-width="0.5" />
<path d="M903.6 155l6-6" fill="none" stroke="#e8e8e8" stroke-width="1.2" />
<path d="M910.8 147.6l-1 5-4-4z" fill="#f0f0f0" />
<path d="M928.00 144.80h10.6l-6.2 7.2h-10.6z" fill="#d4d4d4" stroke="#3b4453" stroke-width="0.5" />
<path d="M928.00 140.40h10.6l-6.2 7.2h-10.6z" fill="#d4d4d4" stroke="#3b4453" stroke-width="0.5" />
<path d="M928.00 136.00h10.6l-6.2 7.2h-10.6z" fill="#dedede" stroke="#3b4453" stroke-width="0.5" />
<circle cx="936.00" cy="150.00" r="3.60" fill="#ffd36b" />
<circle cx="941.80" cy="150.00" r="0.90" fill="#ffd36b" />
<circle cx="940.10" cy="154.10" r="0.90" fill="#ffd36b" />
<circle cx="936.00" cy="155.80" r="0.90" fill="#ffd36b" />
<circle cx="931.90" cy="154.10" r="0.90" fill="#ffd36b" />
<circle cx="930.20" cy="150.00" r="0.90" fill="#ffd36b" />
<circle cx="931.90" cy="145.90" r="0.90" fill="#ffd36b" />
<circle cx="936.00" cy="144.20" r="0.90" fill="#ffd36b" />
<circle cx="940.10" cy="145.90" r="0.90" fill="#ffd36b" />
<path d="M958.20 136.80h10.6l-6.2 7.2h-10.6z" fill="#dcdcdc" stroke="#3b4453" stroke-width="0.5" />
<rect x="960.00" y="149.40" width="9.60" height="6.80" fill="#ffd36b" />
<rect x="964.00" y="151.40" width="1.40" height="3.00" fill="#3b4453" />
<path d="M966.2 149.4v-2.4a2.5 2.5 0 0 1 5 0v1.4" fill="none" stroke="#ffd36b" stroke-width="1.3" />
<path d="M987.80 144.80h10.6l-6.2 7.2h-10.6z" fill="#d4d4d4" stroke="#3b4453" stroke-width="0.5" />
<path d="M987.80 140.40h10.6l-6.2 7.2h-10.6z" fill="#d4d4d4" stroke="#3b4453" stroke-width="0.5" />
<path d="M987.80 136.00h10.6l-6.2 7.2h-10.6z" fill="#dedede" stroke="#3b4453" stroke-width="0.5" />
<path d="M992 147.6l3.8-3 5.6 7.6-3.8 3z" fill="#eec15c" />
<path d="M994 144.2l2.6-2.2 3 1.6 1.6 3.4-2 1.6z" fill="#f4f4f4" />
</g>
<g id="block">
<path d="M1146.4 70h15.4l6.4 6.2v24.8h-21.8z" fill="#7ec4f8" />
<path d="M1161.8 70l6.4 6.2h-6.4z" fill="#b9e0fb" />
<rect x="1129.20" y="83.00" width="25.60" height="19.00" fill="#747a86" stroke="#aab0ba" stroke-width="1.1"/>
<rect x="1127.80" y="100.40" width="2.80" height="2.80" fill="#e8e8e8" />
<circle cx="1153.80" cy="100.80" r="8.60" fill="rgba(120,126,138,0.55)" stroke="#b4b9c2" stroke-width="1.1" />
<text x="1130.00" y="130.80" font-size="15" fill="#fbfbfb" textLength="36.60" lengthAdjust="spacingAndGlyphs" stroke="#3b4453" stroke-width="0.22" >Insert</text>
<path d="M1145.10 139.20h6.2l-3.10 3.6z" fill="#dcdcdc" />
<rect x="1177.60" y="81.20" width="11.40" height="9.00" fill="#747a86" stroke="#aab0ba" stroke-width="1"/>
<rect x="1176.60" y="89.20" width="2.00" height="2.00" fill="#e8e8e8" />
<circle cx="1189.80" cy="90.00" r="3.40" fill="rgba(120,126,138,0.5)" stroke="#b4b9c2" stroke-width="1" />
<polygon points="1191.60,73.60 1192.67,76.61 1195.56,75.24 1194.19,78.13 1197.20,79.20 1194.19,80.27 1195.56,83.16 1192.67,81.79 1191.60,84.80 1190.53,81.79 1187.64,83.16 1189.01,80.27 1186.00,79.20 1189.01,78.13 1187.64,75.24 1190.53,76.61" fill="#ffd36b"/>
<rect x="1177.60" y="110.80" width="11.40" height="9.00" fill="#747a86" stroke="#aab0ba" stroke-width="1"/>
<rect x="1176.60" y="118.80" width="2.00" height="2.00" fill="#e8e8e8" />
<circle cx="1189.80" cy="119.60" r="3.40" fill="rgba(120,126,138,0.5)" stroke="#b4b9c2" stroke-width="1" />
<g transform="translate(1187,115.2) rotate(-42) scale(1.0)">
<path d="M0 0L3.4 -1.8V1.8z" fill="#a0a0a0" />
<rect x="3.40" y="-1.80" width="6.80" height="3.60" fill="#f2c862" />
<path d="M10.2 -1.8h1.6a1.8 1.8 0 0 1 0 3.6h-1.6z" fill="#ea4e5c" />
</g>
<path d="M1178.8 136.6l9.4 0.6 8.8 9.8-7.2 8.8-10.2-10.6z" fill="#d6d6d6" />
<circle cx="1182.20" cy="140.40" r="1.30" fill="#3b4453" />
<path d="M1184 146l5 5M1186.6 143.6l5 5" fill="none" stroke="#777" stroke-width="0.9" />
<g transform="translate(1187.2,145) rotate(-42) scale(1.0)">
<path d="M0 0L3.4 -1.8V1.8z" fill="#a0a0a0" />
<rect x="3.40" y="-1.80" width="6.80" height="3.60" fill="#f2c862" />
<path d="M10.2 -1.8h1.6a1.8 1.8 0 0 1 0 3.6h-1.6z" fill="#ea4e5c" />
</g>
<path d="M1207.30 143.80h6.2l-3.10 3.6z" fill="#dcdcdc" />
</g>
<g id="properties">
<rect x="1242.20" y="72.20" width="25.20" height="34.60" fill="#e2e2e2" />
<rect x="1245.20" y="75.00" width="17.00" height="12.40" fill="#7ec4f8" />
<path d="M1247 94h14M1247 100.4h14" fill="none" stroke="#8a8a8a" stroke-width="1" />
<path d="M1249.6 92.2v3.6M1258 98.6v3.6" fill="none" stroke="#666" stroke-width="1.4" />
<path d="M1261.4 101L1266.8 97.4L1277.2 108.4L1272.2 112z" fill="#f5cd6a" />
<path d="M1267.6 96.6l5.8-4.2 2.2 2.4 2.2-2 3.6 3.8-2 2 2 2.6-4.600 4.800z" fill="#f2f2f2" />
<text x="1240.00" y="131.60" font-size="15" fill="#fbfbfb" textLength="41.60" lengthAdjust="spacingAndGlyphs" stroke="#3b4453" stroke-width="0.22" >Match</text>
<text x="1227.00" y="151.40" font-size="15" fill="#fbfbfb" textLength="67.60" lengthAdjust="spacingAndGlyphs" stroke="#3b4453" stroke-width="0.22" >Properties</text>
<path d="M1310.8 84L1305.80 75.34A10 10 0 0 1 1315.80 75.34z" fill="#f5b82e" />
<path d="M1310.8 84L1315.80 75.34A10 10 0 0 1 1320.80 84.00z" fill="#f58a2e" />
<path d="M1310.8 84L1320.80 84.00A10 10 0 0 1 1315.80 92.66z" fill="#e8504a" />
<path d="M1310.8 84L1315.80 92.66A10 10 0 0 1 1305.80 92.66z" fill="#8a55f0" />
<path d="M1310.8 84L1305.80 92.66A10 10 0 0 1 1300.80 84.00z" fill="#2aa8d8" />
<path d="M1310.8 84L1300.80 84.00A10 10 0 0 1 1305.80 75.34z" fill="#3ec47a" />
<rect x="1301.00" y="105.40" width="20.00" height="1.20" fill="#d6d6d6" />
<rect x="1301.00" y="108.40" width="20.00" height="2.60" fill="#d6d6d6" />
<rect x="1301.00" y="113.00" width="20.00" height="4.20" fill="#d6d6d6" />
<rect x="1301.00" y="119.60" width="20.00" height="5.40" fill="#d6d6d6" />
<line x1="1301.00" y1="138.20" x2="1320.00" y2="138.20" stroke="#bfc2c8" stroke-width="1.2" stroke-dasharray="2.4 1.6"/>
<line x1="1301.00" y1="142.40" x2="1320.00" y2="142.40" stroke="#bfc2c8" stroke-width="1.2" stroke-dasharray="4.4 1.6"/>
<line x1="1301.00" y1="146.40" x2="1320.00" y2="146.40" stroke="#bfc2c8" stroke-width="1.2" />
<line x1="1301.00" y1="150.00" x2="1320.00" y2="150.00" stroke="#bfc2c8" stroke-width="1.2" stroke-dasharray="7 1.4"/>
<line x1="1301.00" y1="152.80" x2="1320.00" y2="152.80" stroke="#bfc2c8" stroke-width="1.2" stroke-dasharray="4 1.4"/>
<rect x="1324.40" y="70.40" width="170.20" height="27.00" fill="#4c586c" stroke="#2c3340" stroke-width="1"/>
<rect x="1324.40" y="101.60" width="170.20" height="27.00" fill="#4c586c" stroke="#2c3340" stroke-width="1"/>
<rect x="1324.40" y="132.60" width="170.20" height="27.00" fill="#4c586c" stroke="#2c3340" stroke-width="1"/>
<rect x="1333.20" y="74.20" width="19.40" height="19.40" fill="#0000ff" stroke="#d0d0dc" stroke-width="1"/>
<text x="1357.80" y="90.00" font-size="15" fill="#fbfbfb" textLength="51.80" lengthAdjust="spacingAndGlyphs" stroke="#4c586c" stroke-width="0.22" >ByLayer</text>
<line x1="1333.00" y1="114.60" x2="1412.60" y2="114.60" stroke="#e4e4e4" stroke-width="1.2" />
<text x="1415.00" y="121.00" font-size="15" fill="#fbfbfb" textLength="51.80" lengthAdjust="spacingAndGlyphs" stroke="#4c586c" stroke-width="0.22" >ByLayer</text>
<line x1="1333.00" y1="146.60" x2="1412.60" y2="146.60" stroke="#e4e4e4" stroke-width="1.2" />
<text x="1415.00" y="152.20" font-size="15" fill="#fbfbfb" textLength="51.80" lengthAdjust="spacingAndGlyphs" stroke="#4c586c" stroke-width="0.22" >ByLayer</text>
<path d="M1483.00 81.90h9.6l-4.80 5z" fill="#dcdcdc" />
<path d="M1483.00 112.90h9.6l-4.80 5z" fill="#dcdcdc" />
<path d="M1483.00 143.90h9.6l-4.80 5z" fill="#dcdcdc" />
</g>
<g id="groups">
<path d="M1511 78.6h-5v32.8h5M1527.6 111.4h5v-19" fill="none" stroke="#d2d4d8" stroke-width="1.2" />
<rect x="1513.40" y="83.40" width="12.20" height="9.40" fill="#4a6a8e" stroke="#5cb8f0" stroke-width="1.1"/>
<circle cx="1519.60" cy="102.40" r="6.20" fill="#747a86" stroke="#aab0ba" stroke-width="1.1" />
<polygon points="1533.80,72.20 1535.56,78.35 1541.15,75.25 1538.05,80.84 1544.20,82.60 1538.05,84.36 1541.15,89.95 1535.56,86.85 1533.80,93.00 1532.04,86.85 1526.45,89.95 1529.55,84.36 1523.40,82.60 1529.55,80.84 1526.45,75.25 1532.04,78.35" fill="#ffd36b"/>
<text x="1504.00" y="131.60" font-size="15" fill="#fbfbfb" textLength="41.40" lengthAdjust="spacingAndGlyphs" stroke="#3b4453" stroke-width="0.22" >Group</text>
<rect x="1556.40" y="76.60" width="7.40" height="5.60" fill="#4a6a8e" stroke="#5cb8f0" stroke-width="1"/>
<ellipse cx="1560" cy="87.6" rx="3.8" ry="3.2" fill="#747a86" stroke="#aab0ba" stroke-width="1"/>
<path d="M1566.4 74.4h3.6v19.2h-3.6" fill="none" stroke="#d2d4d8" stroke-width="1.1" />
<path d="M1568.4 81.4l5.6 5.6M1574 81.4l-5.6 5.6" fill="none" stroke="#e8404a" stroke-width="1.7" />
<path d="M1557.6 106h-3v16.6h3M1563.6 106h3v16.6h-3" fill="none" stroke="#d2d4d8" stroke-width="1.1" />
<rect x="1557.20" y="108.20" width="5.80" height="4.40" fill="#4a6a8e" stroke="#5cb8f0" stroke-width="1"/>
<circle cx="1560.20" cy="117.60" r="2.80" fill="#747a86" stroke="#aab0ba" stroke-width="1" />
<g transform="translate(1563.8,124.4) rotate(-42) scale(1.0)">
<path d="M0 0L3.4 -1.8V1.8z" fill="#a0a0a0" />
<rect x="3.40" y="-1.80" width="6.80" height="3.60" fill="#f2c862" />
<path d="M10.2 -1.8h1.6a1.8 1.8 0 0 1 0 3.6h-1.6z" fill="#ea4e5c" />
</g>
<rect x="1550.40" y="132.40" width="28.40" height="26.40" fill="#44566f" stroke="#5cb8f0" stroke-width="1.1"/>
<path d="M1558.4 136.6h-3v16.6h3M1564.4 136.6h3v8" fill="none" stroke="#d2d4d8" stroke-width="1.1" />
<rect x="1558.40" y="139.00" width="5.40" height="4.00" fill="#3a7a58" stroke="#5fd08a" stroke-width="1"/>
<circle cx="1561.20" cy="148.00" r="2.70" fill="#3a7a58" stroke="#5fd08a" stroke-width="1" />
<path d="M1566 144.6l7 6.4-3 0.4 1.8 3.6-1.6 0.8-1.8-3.6-2.4 2z" fill="#f6f6f6" />
</g>
<g id="utilities">
<path d="M1610.4 81.8v10.8M1645.4 81.8v10.8" fill="none" stroke="#d2d4d8" stroke-width="1.2" />
<line x1="1614.00" y1="87.20" x2="1642.00" y2="87.20" stroke="#d2d4d8" stroke-width="1.2" />
<path d="M1611.4 87.2l4.6-2.6v5.2zM1644.4 87.2l-4.6-2.6v5.2z" fill="#d2d4d8" />
<rect x="1609.80" y="94.40" width="36.00" height="7.80" fill="#f2c55e" />
<line x1="1612.80" y1="94.40" x2="1612.80" y2="97.00" stroke="#c79a36" stroke-width="0.8" />
<line x1="1615.80" y1="94.40" x2="1615.80" y2="98.40" stroke="#c79a36" stroke-width="0.8" />
<line x1="1618.80" y1="94.40" x2="1618.80" y2="97.00" stroke="#c79a36" stroke-width="0.8" />
<line x1="1621.80" y1="94.40" x2="1621.80" y2="98.40" stroke="#c79a36" stroke-width="0.8" />
<line x1="1624.80" y1="94.40" x2="1624.80" y2="97.00" stroke="#c79a36" stroke-width="0.8" />
<line x1="1627.80" y1="94.40" x2="1627.80" y2="98.40" stroke="#c79a36" stroke-width="0.8" />
<line x1="1630.80" y1="94.40" x2="1630.80" y2="97.00" stroke="#c79a36" stroke-width="0.8" />
<line x1="1633.80" y1="94.40" x2="1633.80" y2="98.40" stroke="#c79a36" stroke-width="0.8" />
<line x1="1636.80" y1="94.40" x2="1636.80" y2="97.00" stroke="#c79a36" stroke-width="0.8" />
<line x1="1639.80" y1="94.40" x2="1639.80" y2="98.40" stroke="#c79a36" stroke-width="0.8" />
<line x1="1642.80" y1="94.40" x2="1642.80" y2="97.00" stroke="#c79a36" stroke-width="0.8" />
<text x="1600.20" y="133.00" font-size="15" fill="#fbfbfb" textLength="56.20" lengthAdjust="spacingAndGlyphs" stroke="#3b4453" stroke-width="0.22" >Measure</text>
<path d="M1625.10 141.40h6.2l-3.10 3.6z" fill="#dcdcdc" />
<rect x="1683.40" y="82.20" width="12.00" height="11.60" fill="#f2f2f2" />
<path d="M1686 86h1.4M1689 86h4.4M1686 88.6h1.4M1689 88.6h4.4M1686 91.2h1.4M1689 91.2h4.4" fill="none" stroke="#4a90d8" stroke-width="1.1" />
<path d="M1675 80l7.4 6.8-3.2 0.4 2 3.8-1.8 0.9-2-3.8-2.4 2.2z" fill="#f6f6f6" />
<path d="M1686.8 74l-5 5h3.2l-2 4 5.6-5.6h-3.2z" fill="#f5b82e" />
<rect x="1675.40" y="105.40" width="17.40" height="17.40" fill="none" stroke="#5fd08a" stroke-width="1" stroke-dasharray="2 1.2"/>
<rect x="1677.40" y="111.40" width="9.00" height="9.00" fill="#5cc88a" />
<rect x="1681.00" y="107.40" width="9.60" height="9.60" fill="#5cc88a" stroke="#3b4453" stroke-width="0.6"/>
<path d="M1687.4 113.6l7 6.4-3 0.4 1.8 3.6-1.6 0.8-1.8-3.6-2.4 2z" fill="#f6f6f6" />
<rect x="1677.00" y="136.00" width="14.40" height="19.80" fill="#d8d8d8" />
<rect x="1678.80" y="138.00" width="10.80" height="3.60" fill="#777" />
<rect x="1678.80" y="143.80" width="2.80" height="2.60" fill="#666" />
<rect x="1682.70" y="143.80" width="2.80" height="2.60" fill="#666" />
<rect x="1686.60" y="143.80" width="2.80" height="2.60" fill="#666" />
<rect x="1678.80" y="147.60" width="2.80" height="2.60" fill="#666" />
<rect x="1682.70" y="147.60" width="2.80" height="2.60" fill="#666" />
<rect x="1686.60" y="147.60" width="2.80" height="2.60" fill="#666" />
<rect x="1678.80" y="151.40" width="2.80" height="2.60" fill="#666" />
<rect x="1682.70" y="151.40" width="2.80" height="2.60" fill="#666" />
<rect x="1686.60" y="151.40" width="2.80" height="2.60" fill="#666" />
</g>
<g id="clipboard">
<rect x="1721.80" y="77.20" width="28.00" height="31.00" fill="#deb173" rx="1"/>
<path d="M1729 77.4v-2.2h3.2a3.6 3.6 0 0 1 7 0h3.2v2.2z" fill="#f4f4f4" />
<path d="M1730.8 85.6h16.4l6.8 6.2v21.2h-23.2z" fill="#dedede" />
<path d="M1747.2 85.6l6.8 6.2h-6.8z" fill="#f6f6f6" />
<text x="1721.20" y="134.00" font-size="15" fill="#fbfbfb" textLength="34.20" lengthAdjust="spacingAndGlyphs" stroke="#3b4453" stroke-width="0.22" >Paste</text>
<path d="M1735.10 142.20h6.2l-3.10 3.6z" fill="#dcdcdc" />
<rect x="1774.00" y="74.00" width="14.60" height="17.20" fill="#d4d4d4" />
<path d="M1776.4 78h9.6M1776.4 81.6h9.6M1776.4 85.2h7M1776.4 88.4h5" fill="none" stroke="#8e8e8e" stroke-width="0.9" />
<path d="M1782.6 80.4l9 9.8M1793.6 81.6l-7.4 9" fill="none" stroke="#f2f2f2" stroke-width="1.5" />
<circle cx="1785.20" cy="92.20" r="1.90" fill="none" stroke="#f2f2f2" stroke-width="1.3" />
<circle cx="1791.80" cy="92.00" r="1.90" fill="none" stroke="#f2f2f2" stroke-width="1.3" />
<path d="M1800.90 83.20h6.2l-3.10 3.6z" fill="#dcdcdc" />
<path d="M1776.2 105h8l3 2.8v12.4h-11z" fill="#c9c9c9" />
<path d="M1780.4 109.2h8l3.6 3.4v12.4h-11.6z" fill="#e0e0e0" stroke="#3b4453" stroke-width="0.8" />
<path d="M1800.90 114.00h6.2l-3.10 3.6z" fill="#dcdcdc" />
<text x="1841.40" y="133.00" font-size="15" fill="#fbfbfb" textLength="30.80" lengthAdjust="spacingAndGlyphs" stroke="#3b4453" stroke-width="0.22" >Base</text>
<path d="M1837 77h17.2v13h23v17h-40.2z" fill="#dedede" />
<path d="M1853.90 141.20h6.2l-3.10 3.6z" fill="#dcdcdc" />
</g>
<g id="doctabs">
<path d="M85.2 191.2H270.8L259.4 221H73.8z" fill="#3b4453" />
<line x1="14.20" y1="215.40" x2="22.80" y2="196.60" stroke="#3f4858" stroke-width="1.3" />
<line x1="311.60" y1="215.40" x2="319.00" y2="196.60" stroke="#3f4858" stroke-width="1.3" />
<text x="32.60" y="211.80" font-size="15.2" fill="#eceef0" textLength="32.00" lengthAdjust="spacingAndGlyphs" >Start</text>
<text x="94.00" y="211.80" font-size="15.2" fill="#ffffff" textLength="141.80" lengthAdjust="spacingAndGlyphs" font-weight="bold" >figuras_geometricas</text>
<path d="M246.4 201.8l9 9M255.4 201.8l-9 9" fill="none" stroke="#c4c7cc" stroke-width="1.9" />
<path d="M290 199v14.4M282.8 206.2h14.4" fill="none" stroke="#ececec" stroke-width="2" />
</g>
<g id="palette">
<rect x="9.80" y="236.20" width="1.00" height="1.00" fill="#e8e8e8" />
<rect x="11.80" y="236.20" width="1.00" height="1.00" fill="#e8e8e8" />
<rect x="13.80" y="236.20" width="1.00" height="1.00" fill="#e8e8e8" />
<rect x="15.80" y="236.20" width="1.00" height="1.00" fill="#e8e8e8" />
<rect x="17.80" y="236.20" width="1.00" height="1.00" fill="#e8e8e8" />
<rect x="9.80" y="238.40" width="1.00" height="1.00" fill="#e8e8e8" />
<rect x="11.80" y="238.40" width="1.00" height="1.00" fill="#e8e8e8" />
<rect x="13.80" y="238.40" width="1.00" height="1.00" fill="#e8e8e8" />
<rect x="15.80" y="238.40" width="1.00" height="1.00" fill="#e8e8e8" />
<rect x="17.80" y="238.40" width="1.00" height="1.00" fill="#e8e8e8" />
<text transform="translate(21.6,686.4) rotate(-90)" font-size="14.6" fill="#f0f0f0" textLength="171.6" lengthAdjust="spacingAndGlyphs">Layer Properties Manager</text>
</g>
<g id="viewport">
<text x="36.00" y="246.60" font-size="14.6" fill="#ececec" textLength="21.00" lengthAdjust="spacingAndGlyphs" stroke="#212830" stroke-width="0.22" >[−]</text>
<text x="58.20" y="246.60" font-size="14.6" fill="#ececec" textLength="33.20" lengthAdjust="spacingAndGlyphs" stroke="#212830" stroke-width="0.22" >[Top]</text>
<text x="92.80" y="246.60" font-size="14.6" fill="#ececec" textLength="99.60" lengthAdjust="spacingAndGlyphs" stroke="#212830" stroke-width="0.22" >[2D Wireframe]</text>
<rect x="1835.00" y="244.80" width="13.60" height="4.40" fill="#e6e6e6" />
<rect x="1863.60" y="237.40" width="9.40" height="9.00" fill="none" stroke="#e6e6e6" stroke-width="1.4"/>
<rect x="1860.80" y="240.60" width="9.40" height="9.00" fill="#212830" stroke="#e6e6e6" stroke-width="2.2"/>
<path d="M1885.6 238.4l10.8 10.4M1896.4 238.4l-10.8 10.4" fill="none" stroke="#e6e6e6" stroke-width="2.8" />
</g>
<g id="drawing" fill="none">
<line x1="781.20" y1="411.40" x2="781.20" y2="657.40" stroke="#7e1a22" stroke-width="1.15" />
<line x1="1027.40" y1="411.40" x2="1027.40" y2="657.40" stroke="#7e1a22" stroke-width="1.15" />
<line x1="730.00" y1="411.40" x2="730.00" y2="657.40" stroke="#0808de" stroke-width="1.35" />
<line x1="1078.60" y1="411.40" x2="1078.60" y2="657.40" stroke="#0808de" stroke-width="1.35" />
<circle cx="904.20" cy="534.40" r="123.00" fill="none" stroke="#d8d800" stroke-width="1.15" />
<path d="M781.3 657.4L904.2 444.5L1027.2 657.4" fill="none" stroke="#00d400" stroke-width="1.15" />
<polygon points="904.20,278.60 1103.35,423.29 1027.28,657.41 781.12,657.41 705.05,423.29" stroke="#00e2ea" stroke-width="1.2"/>
<rect x="704.90" y="411.40" width="398.80" height="246.00" fill="none" stroke="#d000d0" stroke-width="1.15"/>
<line x1="781.20" y1="595.60" x2="781.20" y2="651.40" stroke="#dcb6b6" stroke-width="1.3" />
<line x1="787.80" y1="657.50" x2="843.00" y2="657.50" stroke="#e4a8e4" stroke-width="1.4" />
<rect x="775.80" y="651.60" width="11.80" height="11.80" fill="none" stroke="#d6d6d6" stroke-width="1.3" rx="1.6"/>
</g>
<text x="782.40" y="591.20" font-size="20.2" fill="#e2e2e2" textLength="15.60" lengthAdjust="spacingAndGlyphs" stroke="#212830" stroke-width="0.22" >Y</text>
<text x="847.40" y="656.20" font-size="20.6" fill="#e2e2e2" textLength="15.60" lengthAdjust="spacingAndGlyphs" stroke="#212830" stroke-width="0.22" >X</text>
<g fill="none">
<line x1="865.50" y1="269.80" x2="865.50" y2="367.00" stroke="#dc14dc" stroke-width="1.15" />
<line x1="816.80" y1="318.50" x2="914.20" y2="318.50" stroke="#dc14dc" stroke-width="1.15" />
<rect x="862.30" y="315.30" width="6.40" height="6.40" fill="#212830" stroke="#e61ee6" stroke-width="1.2"/>
</g>
<g id="viewcube">
<circle cx="1822.20" cy="341.80" r="56.80" fill="none" stroke="#464b55" stroke-width="13.6" />
<rect x="1794.80" y="314.80" width="55.00" height="54.60" fill="#adadad" />
<rect x="1805.00" y="325.00" width="34.00" height="33.60" fill="#b1b5c2" />
<text x="1811.00" y="347.00" font-size="14.4" fill="#4a4f5a" textLength="22.80" lengthAdjust="spacingAndGlyphs" font-weight="bold" >TOP</text>
<text x="1814.60" y="291.20" font-size="22" fill="#b6b6b6" textLength="14.80" lengthAdjust="spacingAndGlyphs" font-weight="bold" >N</text>
<text x="1815.20" y="410.20" font-size="22" fill="#b6b6b6" textLength="14.40" lengthAdjust="spacingAndGlyphs" font-weight="bold" >S</text>
<text x="1751.60" y="350.80" font-size="22" fill="#b6b6b6" textLength="22.20" lengthAdjust="spacingAndGlyphs" font-weight="bold" >W</text>
<text x="1874.80" y="350.80" font-size="22" fill="#b6b6b6" textLength="13.60" lengthAdjust="spacingAndGlyphs" font-weight="bold" >E</text>
<rect x="1793.80" y="434.80" width="56.00" height="19.00" fill="#9b9db0" rx="4" stroke="#b4b6c6" stroke-width="1"/>
<text x="1798.00" y="449.00" font-size="13.4" fill="#6a6d7c" textLength="29.80" lengthAdjust="spacingAndGlyphs" >WCS</text>
<path d="M1835.6 441.6h9l-4.5 5z" fill="#9b9db0" stroke="#b8bac8" stroke-width="1" />
</g>
<g id="navbar" fill="none" stroke="#494f59" stroke-width="1.4">
<circle cx="1898.80" cy="491.60" r="3.60" fill="none" />
<path d="M1896.8 489.6l4 4M1900.8 489.6l-4 4" fill="none" stroke="#494f59" stroke-width="1" />
<path d="M1886 506.4h10a4 4 0 0 1 4 4v9.6a14 14 0 1 1-14-13.6z" fill="none" />
<circle cx="1886.00" cy="520.40" r="9.00" fill="none" />
<circle cx="1886.00" cy="520.40" r="5.00" fill="none" />
<path d="M1883.50 544.50h5l-2.50 3z" fill="#494f59" />
<line x1="1869.00" y1="553.60" x2="1903.00" y2="553.60" stroke="#666c76" stroke-width="1" />
<path d="M1879.4 586.4C1876 583.6 1874 579 1871.8 575c-1-2 1.6-3.6 3.2-1.8l3.2 3.8L1875.6 566c-0.600-2.400 2.600-3.400 3.400-1l2.200 7.600L1881 561.600c-0.200-2.600 3.200-2.800 3.600-0.200l1 10.200L1887.600 562c0.400-2.400 3.600-2 3.400 0.400l-0.800 9.800L1893 566c0.800-2.200 3.800-1.200 3.200 1l-2 11c-0.600 4-2.400 7-5.600 8.400z" fill="none" />
<path d="M1872.6 595.6l14 13M1886.600 595.600l-14 13" fill="none" />
<path d="M1872.200 600v-4.800h4.800M1887 600v-4.800h-4.800M1872.200 604.400v4.800h4.800" fill="none" />
<circle cx="1890.60" cy="612.40" r="5.20" fill="none" />
<line x1="1894.40" y1="616.40" x2="1899.00" y2="621.00" stroke="#494f59" stroke-width="2.6" />
<path d="M1883.50 631.10h5l-2.50 3z" fill="#494f59" />
<ellipse cx="1886" cy="659" rx="14" ry="5.4"/>
<path d="M1883.400 667v-17.600h-2.600l5.200-6.400 5.200 6.400h-2.600v17.600z" fill="#5b616b" />
<path d="M1874 661.400l-3.200-3.600 5-0.600z" fill="#494f59" />
<path d="M1883.50 678.10h5l-2.50 3z" fill="#494f59" />
<line x1="1869.00" y1="688.00" x2="1903.00" y2="688.00" stroke="#666c76" stroke-width="1" />
<rect x="1872.20" y="693.00" width="7.40" height="7.40" fill="none" />
<rect x="1881.80" y="693.00" width="7.40" height="7.40" fill="none" />
<rect x="1891.40" y="693.00" width="7.40" height="7.40" fill="none" />
<rect x="1872.20" y="705.00" width="19.60" height="16.00" fill="none" />
<path d="M1878 708.600v9l7.600-4.500z" fill="#494f59" />
<circle cx="1898.80" cy="737.80" r="3.60" fill="none" />
<line x1="1896.60" y1="737.80" x2="1901.00" y2="737.80" stroke="#494f59" stroke-width="1" />
</g>
<g id="cmd">
<rect x="415.00" y="741.40" width="1.90" height="1.90" fill="#f0f0f0" />
<rect x="418.84" y="741.40" width="1.90" height="1.90" fill="#f0f0f0" />
<rect x="422.68" y="741.40" width="1.90" height="1.90" fill="#f0f0f0" />
<rect x="426.52" y="741.40" width="1.90" height="1.90" fill="#f0f0f0" />
<rect x="430.36" y="741.40" width="1.90" height="1.90" fill="#f0f0f0" />
<rect x="434.20" y="741.40" width="1.90" height="1.90" fill="#f0f0f0" />
<rect x="415.00" y="745.20" width="1.90" height="1.90" fill="#f0f0f0" />
<rect x="418.84" y="745.20" width="1.90" height="1.90" fill="#f0f0f0" />
<rect x="422.68" y="745.20" width="1.90" height="1.90" fill="#f0f0f0" />
<rect x="426.52" y="745.20" width="1.90" height="1.90" fill="#f0f0f0" />
<rect x="430.36" y="745.20" width="1.90" height="1.90" fill="#f0f0f0" />
<rect x="434.20" y="745.20" width="1.90" height="1.90" fill="#f0f0f0" />
<path d="M418 757.600l10 9.600M428 757.600l-10 9.600" fill="none" stroke="#ececec" stroke-width="2" />
<path d="M416.400 800.400l9.800-9.800" fill="none" stroke="#e4e4e4" stroke-width="3" stroke-linecap="round"/>
<path d="M433.600 787.200a5.200 5.200 0 0 1-7.400 4.400 5.200 5.200 0 0 1 2.600-8.400l-1.200 3.800 2.400 1.800z" fill="#e4e4e4" />
</g>
<g id="cmdtext" class="mono">
<text x="443.7" y="753.2" font-size="15.02" fill="#101010" stroke="#c9c9c9" stroke-width="0.1">Command: MOVE</text>
<text x="443.7" y="772.2" font-size="15.02" fill="#101010" stroke="#c9c9c9" stroke-width="0.1">Select objects: 1 found</text>
<text x="443.7" y="791.2" font-size="15.02" fill="#101010" stroke="#c9c9c9" stroke-width="0.1">Select objects:</text>
<text x="443.7" y="810.2" font-size="15.02" fill="#101010" stroke="#c9c9c9" stroke-width="0.1">Specify base point or [Displacement] &lt;Displacement&gt;:</text>
<text x="443.7" y="829.2" font-size="15.02" fill="#101010" stroke="#c9c9c9" stroke-width="0.1">Specify second point or &lt;use first point as displacement&gt;: cen</text>
<text x="443.7" y="848.2" font-size="15.02" fill="#101010" stroke="#c9c9c9" stroke-width="0.1">of</text>
<text x="443.7" y="867.2" font-size="15.02" fill="#101010" stroke="#c9c9c9" stroke-width="0.1">Command:</text>
</g>
</svg>
</div>
</body></html>
